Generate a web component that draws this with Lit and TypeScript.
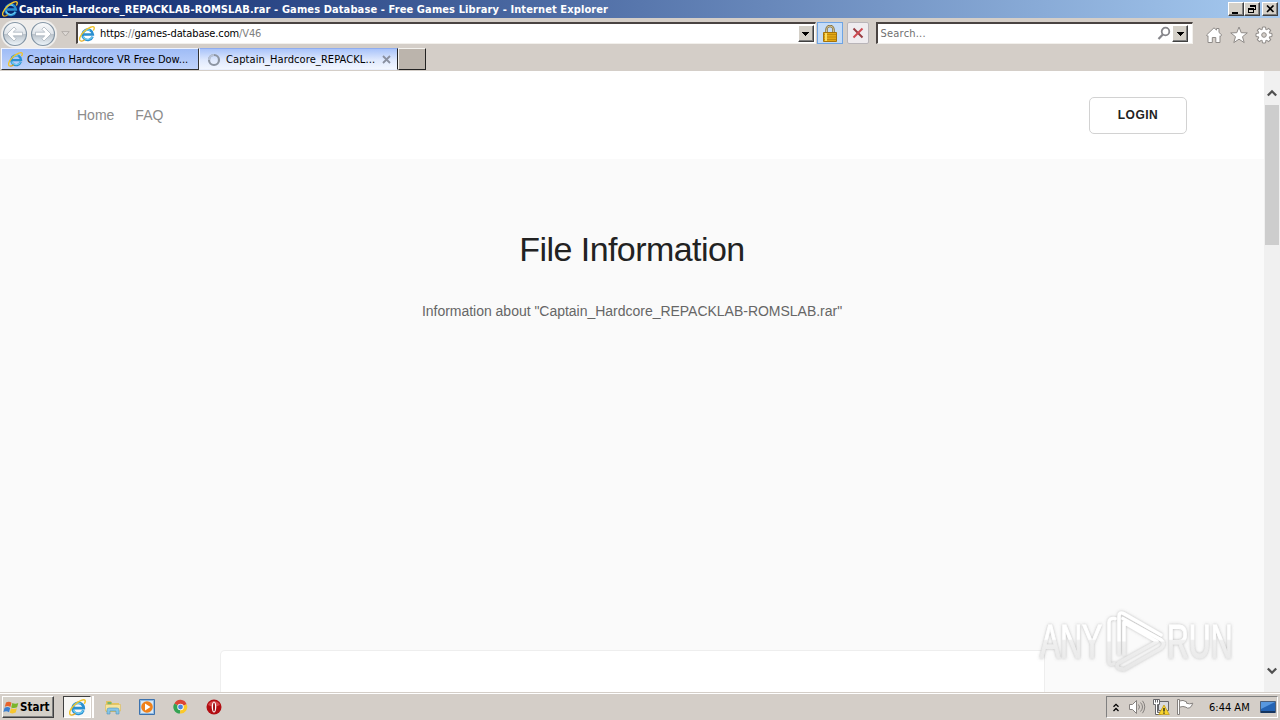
import { html, css, svg, LitElement } from 'lit';
import { customElement } from 'lit/decorators.js';

const ieLogo = (size: number) => html`
  <svg width=${size} height=${size} viewBox="0 0 16 16" fill="none">
    <path d="M13.600 10.600A5.200 5.200 0 1 1 13.900 8.600H4.600" stroke="#2a8fd0" stroke-width="2.500" />
    <path d="M13.300 11A5.200 5.200 0 0 1 4 10.200M4.500 6.500A4.800 4.800 0 0 1 11 4.500" stroke="#6fd0f5" stroke-width="1.200" />
    <path d="M2 15C-.8 14.500.8 9.500 5.200 5.400S14.300-.2 15.100 1.300c.5.900-.2 2.300-.8 3.200" stroke="#f0c42c" stroke-width="1.400" />
    <path d="M2 15c1.300.3 3-.6 4-1.400" stroke="#e2a51c" stroke-width="1.200" />
  </svg>
`;

const arrow = (flip: boolean) => html`
  <svg width="28" height="28" viewBox="0 0 28 28">
    <defs>
      <linearGradient id="disc" x1="0" y1="0" x2="0" y2="1">
        <stop offset="0" stop-color="#fafbfc" />
        <stop offset=".49" stop-color="#dfe4e9" />
        <stop offset=".5" stop-color="#b9c1c9" />
        <stop offset="1" stop-color="#edf5fb" />
      </linearGradient>
    </defs>
    <circle cx="14" cy="14" r="13" fill="#f3f2f0" />
    <circle cx="14" cy="14" r="11.500" fill="url(#disc)" stroke="#8495a5" stroke-width="1.200" />
    <path
      transform=${flip ? 'translate(28 0) scale(-1 1)' : ''}
      d="M6 14l7-7 2.200 2.200-3 3H21.500v3.600h-9.300l3 3L13 21z"
      fill="#fff"
      stroke="#a3adb7"
      stroke-width=".7"
    />
  </svg>
`;

const dropArrow = html`
  <svg width="7" height="4" viewBox="0 0 7 4" shape-rendering="crispEdges">
    <path d="M0 0h7L3.500 4z" fill="#000" />
  </svg>
`;

const chevron = (d: string) => html`
  <svg width="10" height="8" viewBox="0 0 10 8" fill="none">
    <path d=${d} stroke="#505050" stroke-width="2.300" />
  </svg>
`;

const gearTeeth = [0, 45, 90, 135, 180, 225, 270, 315];

@customElement('browser-chrome')
export class BrowserChrome extends LitElement {
  static styles = css`
    :host {
      display: block;
      height: 71px;
      background: #d4cec8;
      color: #000;
      font: 11px 'DejaVu Sans Condensed', 'DejaVu Sans', sans-serif;
      font-stretch: condensed;
      white-space: nowrap;
    }
    svg {
      display: block;
      flex: none;
    }
    .title {
      display: flex;
      align-items: center;
      box-sizing: border-box;
      height: 18px;
      padding: 0 2px;
      background: linear-gradient(90deg, #0a246a, #a6caf0);
      color: #fff;
      font-weight: bold;
    }
    .title-text {
      flex: 1;
      padding-left: 1px;
      letter-spacing: 0.107px;
    }
    .win {
      display: flex;
      align-items: center;
      justify-content: center;
      width: 16px;
      height: 14px;
    }
    .win:last-child {
      margin-left: 2px;
    }
    .raised {
      box-sizing: border-box;
      background: #d4d0c8;
      border: 1px solid;
      border-color: #fff #404040 #404040 #fff;
      box-shadow: inset -1px -1px #808080;
    }
    .toolbar {
      display: flex;
      align-items: center;
      height: 30px;
      box-sizing: border-box;
      padding: 1px 7px 0 1px;
    }
    .nav {
      display: flex;
      border-radius: 14px;
      background: #eeecea;
    }
    .history {
      margin: 0 6px 0 4px;
    }
    .field {
      display: flex;
      align-items: center;
      box-sizing: border-box;
      height: 22px;
      margin-top: -1px;
      background: #fff;
      border: 1px solid;
      border-top-width: 2px;
      border-left-width: 2px;
      border-color: #4a4442 #f2f0ec #f2f0ec #4a4442;
    }
    .address {
      width: 741px;
      padding: 0 1px;
    }
    .url {
      flex: 1;
      padding-left: 5px;
      letter-spacing: -0.13px;
    }
    .grey {
      color: #808080;
    }
    .drop {
      display: flex;
      align-items: center;
      justify-content: center;
      width: 16px;
      height: 17px;
    }
    .lock,
    .stop {
      display: flex;
      align-items: center;
      justify-content: center;
      box-sizing: border-box;
      height: 22px;
      margin-top: -1px;
    }
    .lock {
      width: 26px;
      margin-left: 1px;
      background: #c5dcf7;
      border: 1px solid #6ea4e4;
    }
    .stop {
      width: 22px;
      margin: -1px 7px 0 4px;
      background: #efecef;
      border: 1px solid #b9b5b9;
      border-radius: 2px;
    }
    .search {
      width: 318px;
      padding: 0 4px 0 3px;
      color: #707070;
    }
    .hint {
      flex: 1;
      letter-spacing: 0.2px;
    }
    .tools {
      display: flex;
      gap: 7px;
      margin: 2px 0 0 12px;
    }
    .tabs {
      display: flex;
      height: 23px;
      padding-left: 1px;
    }
    .tab {
      display: flex;
      align-items: center;
      box-sizing: border-box;
      width: 198px;
      height: 22px;
      padding: 1px 6px 0;
      border: 1px solid;
      border-color: #eef3ff #333 #333 #f4f7ff;
      background: linear-gradient(#9fbcf6, #c0d3fb);
    }
    .tab.active {
      width: 199px;
      background: linear-gradient(#a9c3fa 0%, #dfe9fd 55%, #f2f6ff 100%);
      border-color: #8fadf0 #222 #e8eefc #f4f7ff;
    }
    .tab-text {
      flex: 1;
      padding-left: 4px;
      letter-spacing: 0.02px;
    }
    .active .tab-text {
      letter-spacing: 0.1px;
    }
    .new-tab {
      box-sizing: border-box;
      width: 28px;
      height: 22px;
      border: 1px solid;
      border-color: #f4f2ee #222 #222 #f4f2ee;
      background: #bbb4ac;
    }
  `;

  render() {
    return html`
      <div class="title">
        ${ieLogo(16)}
        <span class="title-text"
          >Captain_Hardcore_REPACKLAB-ROMSLAB.rar - Games Database - Free Games Library - Internet Explorer</span
        >
        <span class="win raised">
          <svg width="10" height="9" shape-rendering="crispEdges"><path d="M1 7h6v2H1z" /></svg>
        </span>
        <span class="win raised">
          <svg width="10" height="10" fill="none" stroke="#000" shape-rendering="crispEdges">
            <path d="M3.500 3V1.500h5v4H7M3 2.500h6M1.500 4.500h5v4h-5zM1 5.500h6" />
          </svg>
        </span>
        <span class="win raised">
          <svg width="9" height="8"><path d="M1 .5l6.500 6.500M7.500.5L1 7" stroke="#000" stroke-width="1.600" /></svg>
        </span>
      </div>
      <div class="toolbar">
        <div class="nav">${arrow(false)}${arrow(true)}</div>
        <svg class="history" width="9" height="6" viewBox="0 0 9 6">
          <path d="M.8.6h7.400L4.500 5z" fill="#dedad6" stroke="#aaa5a0" stroke-width=".8" />
        </svg>
        <div class="field address">
          ${ieLogo(16)}
          <span class="url"
            >https<span class="grey">://</span>games-database.com<span class="grey">/V46</span></span
          >
          <span class="drop raised">${dropArrow}</span>
        </div>
        <div class="lock">
          <svg width="14" height="17" viewBox="0 0 14 17">
            <path d="M3.500 8V4.500a3.500 3.500 0 0 1 7 0V8" fill="none" stroke="#806a35" stroke-width="2.400" />
            <path d="M3.500 8V4.500a3.500 3.500 0 0 1 7 0V8" fill="none" stroke="#e6dcb0" stroke-width=".8" />
            <path d="M.5 7.500h13v9H.5z" fill="#e3a817" stroke="#a5730b" />
            <path d="M1 9.500h12M1 12h12M1 14.500h12" stroke="#c18a0c" />
            <path d="M3 8v8" stroke="#f9dc62" stroke-width="2" />
          </svg>
        </div>
        <div class="stop">
          <svg width="12" height="12" viewBox="0 0 12 12">
            <path d="M1.500 1.500l9 9" stroke="#973d42" stroke-width="2" />
            <path d="M10.500 1.500l-9 9" stroke="#cf4a52" stroke-width="2" />
          </svg>
        </div>
        <div class="field search">
          <span class="hint">Search...</span>
          <svg width="15" height="15" viewBox="0 0 15 15" fill="none" stroke="#85858a">
            <circle cx="8.500" cy="5.500" r="3.800" stroke-width="1.800" />
            <path d="M5.800 8.500L1.500 13" stroke-width="2.200" />
          </svg>
          <span class="drop raised">${dropArrow}</span>
        </div>
        <div class="tools">
          <svg width="18" height="18" viewBox="0 0 18 18" fill="#fff" stroke="#8f8b88">
            <path d="M1.500 9L9 1.800l2.500 2.300V2.500H14v4L16.800 9l-1.200 1.200-.6-.5v6.800h-4.200v-5H7.300v5H3V9.700l-.6.5z" />
          </svg>
          <svg width="18" height="18" viewBox="0 0 18 18" fill="#fff" stroke="#8f8b88">
            <path d="M9 1l2.200 5.700 6.100.2-4.800 3.800 1.700 5.900L9 13.200l-5.200 3.400 1.700-5.900L.7 6.900l6.100-.2z" />
          </svg>
          <svg width="18" height="18" viewBox="0 0 18 18">
            ${gearTeeth.map(
              (a) => svg`<path d="M7 4l.5-3h3l.5 3" fill="#fff" stroke="#8f8b88" transform="rotate(${a} 9 9)" />`
            )}
            <circle cx="9" cy="9" r="5.400" fill="#fff" />
            <circle cx="9" cy="9" r="2.300" fill="#d4cec8" stroke="#8f8b88" />
          </svg>
        </div>
      </div>
      <div class="tabs">
        <div class="tab">
          ${ieLogo(15)}
          <span class="tab-text">Captain Hardcore VR Free Dow...</span>
        </div>
        <div class="tab active">
          <svg width="16" height="14" viewBox="0 0 16 14" fill="none" stroke-width="2.200">
            <circle cx="8" cy="7" r="5" stroke="#8d95a2" />
            <path d="M3 7a5 5 0 0 1 5-5" stroke="#b7c2d6" />
          </svg>
          <span class="tab-text">Captain_Hardcore_REPACKL...</span>
          <svg width="9" height="9" viewBox="0 0 9 9">
            <path d="M1 1l7 7M8 1L1 8" stroke="#8a90a0" stroke-width="1.800" />
          </svg>
        </div>
        <div class="new-tab"></div>
      </div>
    `;
  }
}

@customElement('file-page')
export class FilePage extends LitElement {
  static styles = css`
    :host {
      display: flex;
      flex: 1;
      min-height: 0;
      position: relative;
      overflow: hidden;
      font-family: 'Liberation Sans', Arial, sans-serif;
      font-size: 14px;
    }
    .page {
      display: flex;
      flex-direction: column;
      flex: 1;
      background: #fafafa;
    }
    header {
      display: flex;
      align-items: center;
      box-sizing: border-box;
      height: 88px;
      padding: 0 77px;
      background: #fff;
      color: #8c8c8c;
    }
    nav {
      display: flex;
      flex: 1;
      gap: 21px;
    }
    .login {
      display: flex;
      align-items: center;
      justify-content: center;
      box-sizing: border-box;
      width: 98px;
      height: 37px;
      border: 1px solid #d2d2d2;
      border-radius: 5px;
      color: #222;
      font-size: 12px;
      font-weight: bold;
      letter-spacing: 0.5px;
    }
    main {
      display: flex;
      flex-direction: column;
      flex: 1;
      align-items: center;
      min-height: 0;
    }
    h1 {
      margin: 70px 0 0;
      color: #222;
      font-size: 34px;
      font-weight: normal;
      letter-spacing: -0.56px;
      line-height: 40px;
    }
    p {
      margin: 34px 0 0;
      color: #666;
      letter-spacing: -0.02px;
      line-height: 16px;
    }
    .card {
      flex: 1;
      box-sizing: border-box;
      width: 825px;
      margin-top: 331px;
      background: #fff;
      border: 1px solid #eee;
      border-bottom: 0;
      border-radius: 5px 5px 0 0;
    }
    .scroll {
      display: flex;
      flex-direction: column;
      align-items: center;
      justify-content: space-between;
      box-sizing: border-box;
      width: 16px;
      padding: 18px 0 17px;
      background: #f0f0f0;
    }
    .thumb {
      width: 14px;
      height: 140px;
      margin: 8px 0 auto;
      background: #cdcdcd;
    }
    .scroll svg {
      display: block;
      flex: none;
    }
    .watermark {
      position: absolute;
      right: 38px;
      bottom: 14px;
    }
  `;

  render() {
    return html`
      <div class="page">
        <header>
          <nav><span>Home</span><span>FAQ</span></nav>
          <div class="login">LOGIN</div>
        </header>
        <main>
          <h1>File Information</h1>
          <p>Information about "Captain_Hardcore_REPACKLAB-ROMSLAB.rar"</p>
          <div class="card"></div>
        </main>
      </div>
      <div class="scroll">
        ${chevron('M.8 6.500L5 2.300l4.200 4.200')}
        <div class="thumb"></div>
        ${chevron('M.8 1.500L5 5.700l4.200-4.200')}
      </div>
      <svg class="watermark" width="206" height="72" viewBox="0 0 206 72">
        <defs>
          <linearGradient id="fade" x1="0" y1="0" x2="0" y2="72" gradientUnits="userSpaceOnUse">
            <stop offset=".46" stop-color="#fff" />
            <stop offset=".48" stop-color="#f0f0f0" />
            <stop offset="1" stop-color="#e4e4e4" />
          </linearGradient>
          <linearGradient id="text-fade" x1="0" y1="-52" x2="0" y2="20" gradientUnits="userSpaceOnUse">
            <stop offset=".46" stop-color="#fff" />
            <stop offset=".48" stop-color="#f0f0f0" />
            <stop offset="1" stop-color="#e4e4e4" />
          </linearGradient>
          <filter id="halo" x="-10%" y="-20%" width="120%" height="140%">
            <feDropShadow dx="0" dy="0" stdDeviation="1.500" flood-color="#777" flood-opacity=".5" />
          </filter>
        </defs>
        <g filter="url(#halo)">
          <g
            font-family="'Liberation Sans', sans-serif"
            font-size="48"
            fill="url(#text-fade)"
            stroke="url(#text-fade)"
            stroke-width="1"
          >
            <text transform="translate(4 52) scale(.63 1)">ANY</text>
            <text transform="translate(131 52) scale(.63 1)">RUN</text>
          </g>
          <g
            transform="translate(0 3) scale(1 .96)"
            fill="none"
            stroke="url(#fade)"
            stroke-width="3.500"
            stroke-linejoin="round"
            stroke-linecap="round"
          >
            <path d="M79 10q-6-1-6 4v41q0 4 5 2" />
            <path d="M83 47V8q0-6 5-3l37 22" />
            <path d="M88 47V14l33 20-38 22q-4 3 0 6l5 1 37-22q5-5 0-9L87 10" />
          </g>
        </g>
      </svg>
    `;
  }
}

@customElement('task-bar')
export class TaskBar extends LitElement {
  static styles = css`
    :host {
      display: flex;
      align-items: center;
      box-sizing: border-box;
      height: 28px;
      padding: 1px 2px 0;
      border-top: 1px solid #d4cec8;
      box-shadow: inset 0 1px #fff;
      background: #d4cec8;
      color: #000;
      font: 11px 'DejaVu Sans Condensed', 'DejaVu Sans', sans-serif;
      font-stretch: condensed;
      white-space: nowrap;
    }
    svg {
      display: block;
      flex: none;
    }
    .start {
      display: flex;
      align-items: center;
      box-sizing: border-box;
      width: 52px;
      height: 22px;
      background: #d4d0c8;
      border: 1px solid;
      border-color: #fff #404040 #404040 #fff;
      box-shadow: inset -1px -1px #808080;
      font-size: 11.500px;
      font-weight: bold;
    }
    .pinned {
      display: flex;
      flex: 1;
      align-items: center;
      gap: 18px;
      margin-left: 9px;
    }
    .running {
      display: flex;
      align-items: center;
      justify-content: center;
      box-sizing: border-box;
      width: 28px;
      height: 22px;
      margin-right: -4px;
      background: #f8f7f5;
      border: 1px solid;
      border-color: #404040 #fff #fff #404040;
      box-shadow: 1px 0 #d4cec8, 3px 0 #fff;
    }
    .tray {
      display: flex;
      align-items: center;
      box-sizing: border-box;
      width: 172px;
      height: 22px;
      padding-left: 6px;
      border: 1px solid;
      border-color: #808080 #fff #fff #808080;
    }
    .icons {
      display: flex;
      gap: 7px;
      margin-left: 9px;
    }
    .clock {
      flex: 1;
      padding-left: 15px;
    }
    .desktop {
      margin-right: 1px;
    }
  `;

  render() {
    return html`
      <div class="start">
        <svg width="17" height="17" viewBox="0 0 17 17">
          <path d="M3 3.500q3-1.800 5.500.2L7.400 8Q5 6.300 1.800 7.800z" fill="#e8642c" />
          <path d="M9.300 4q3 1.500 6 0l-1.200 4.300q-3 1.500-5.900.2z" fill="#79b52b" />
          <path d="M1.600 8.700q3-1.700 5.600.2L6 13.300Q3.500 11.500.4 13z" fill="#3b7fd0" />
          <path d="M8 9.300q3 1.400 5.900 0l-1.200 4.300q-3 1.500-5.900.2z" fill="#f7c62e" />
        </svg>
        Start
      </div>
      <div class="pinned">
        <div class="running">${ieLogo(17)}</div>
        <svg width="16" height="16" viewBox="0 0 16 16">
          <path d="M1 2h5l1 2h7v9H1z" fill="#e5c35c" />
          <path d="M2.500 3h4v3h-4z" fill="#78b66a" />
          <path d="M.5 5.500h15V12H.5z" fill="#f6e49b" stroke="#d9b95a" stroke-width=".6" />
          <path d="M2 15v-4q0-2 2-2h8q2 0 2 2v4h-3v-3H5v3z" fill="#87c5e6" stroke="#5295bd" stroke-width=".6" />
        </svg>
        <svg width="16" height="16" viewBox="0 0 16 16">
          <path d="M.5.5h15v15H.5z" fill="#91bbe3" stroke="#3c72ae" />
          <path d="M2 2h12v12H2z" fill="#d7e8f6" />
          <circle cx="8" cy="8" r="5.800" fill="#f08119" />
          <path d="M6 4.500v7L11.500 8z" fill="#fff" />
        </svg>
        <svg width="15" height="16" viewBox="0 0 16 16">
          <path d="M8 8L1.500 4.200A7 7 0 0 1 14.500 5z" fill="#dc4535" />
          <path d="M8 8L1.500 4.200A7 7 0 0 0 7.500 15z" fill="#34a353" />
          <path d="M8 8l6.500-3a7 7 0 0 1-7 10z" fill="#fbc928" />
          <circle cx="8" cy="8" r="3.400" fill="#fff" />
          <circle cx="8" cy="8" r="2.600" fill="#4a86e0" />
        </svg>
        <svg width="16" height="16" viewBox="0 0 16 16">
          <circle cx="8" cy="8" r="7.500" fill="#b20d12" />
          <path d="M2 6a6.300 5.500 0 0 1 12 0q-6 3-12 0" fill="#d8474a" />
          <ellipse cx="8" cy="8" rx="2.300" ry="5.500" fill="#fff" />
          <ellipse cx="8" cy="8" rx="1" ry="4.500" fill="#a01016" />
        </svg>
      </div>
      <div class="tray">
        <svg width="6" height="9" viewBox="0 0 6 9" fill="none" stroke="#000" stroke-width="1.300">
          <path d="M.5 3.800L3 1.300l2.500 2.500M.5 8L3 5.500 5.500 8" />
        </svg>
        <div class="icons">
          <svg width="18" height="16" viewBox="0 0 18 16" fill="none" stroke="#85817e">
            <path d="M1.500 5.500h3l4-4v13l-4-4h-3z" fill="#fff" />
            <path d="M10.500 5.500q2 2.500 0 5M12.500 3.500q4 4.500 0 9M14.500 1.800q4.500 6 0 12.400" />
          </svg>
          <svg width="17" height="16" viewBox="0 0 17 16">
            <path d="M5.500 2.500h10v9h-10z" fill="#d9dadd" stroke="#66666a" />
            <path d="M.5.500h6v5h-2v8H8v2H2.500v-10h-2z" fill="#fff" stroke="#66666a" />
            <path d="M2.500 1v2.500m2-2.500v2.500" stroke="#66666a" />
            <path d="M11 6l5.300 9.500H5.700z" fill="#f8d42b" stroke="#bf9510" stroke-width=".7" />
            <path d="M11 9v3.500m0 1v1.300" stroke="#222" stroke-width="1.400" />
          </svg>
          <svg width="17" height="16" viewBox="0 0 17 16" fill="#fff" stroke="#85817e">
            <path d="M.5.500h2v15h-2z" />
            <path d="M2.500 2q3.500-1.500 7 .8v1.400q3 1.300 6.300 0-1 3.800-3.600 4.800-2.200.6-3.200-.8-3-1.500-6.500 0z" />
          </svg>
        </div>
        <span class="clock">6:44 AM</span>
        <svg class="desktop" width="16" height="13" viewBox="0 0 16 13">
          <path d="M.5.500h15v11H.5z" fill="#2564b4" stroke="#4b5f7a" />
          <path d="M1 1h14L1 8z" fill="#5898df" />
          <path d="M1 11h14" stroke="#16355f" stroke-width="2" />
        </svg>
      </div>
    `;
  }
}

@customElement('app-root')
export class AppRoot extends LitElement {
  static styles = css`
    :host {
      display: flex;
      flex-direction: column;
      width: 1280px;
      height: 720px;
      overflow: hidden;
    }
  `;

  render() {
    return html`
      <browser-chrome></browser-chrome>
      <file-page></file-page>
      <task-bar></task-bar>
    `;
  }
}
